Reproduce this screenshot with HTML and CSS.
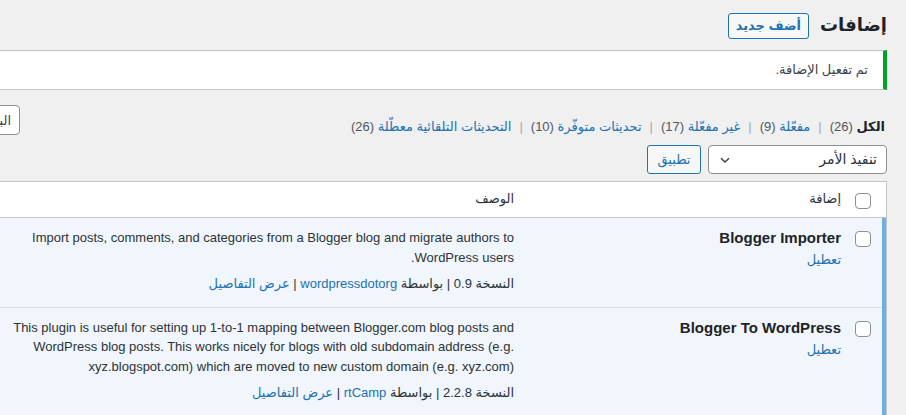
FILE: index.html
```html
<!DOCTYPE html>
<html lang="ar" dir="rtl">
<head>
<meta charset="utf-8">
<title>إضافات</title>
<link rel="stylesheet" href="styles.css">
</head>
<body>
<div class="wrap">
  <div class="head">
    <h1 class="page-title">إضافات</h1>
    <a class="btn btn-primary-outline" href="#">أضف جديد</a>
  </div>

  <div class="notice"><p>تم تفعيل الإضافة.</p></div>

  <div class="filters-row">
    <ul class="subsubsub">
      <li><span class="current">الكل</span> <span class="count">(26)</span></li>
      <li class="sep">|</li>
      <li><a href="#">مفعّلة <span class="count">(9)</span></a></li>
      <li class="sep">|</li>
      <li><a href="#">غير مفعّلة <span class="count">(17)</span></a></li>
      <li class="sep">|</li>
      <li><a href="#">تحديثات متوفّرة <span class="count">(10)</span></a></li>
      <li class="sep">|</li>
      <li><a href="#">التحديثات التلقائية معطّلة <span class="count">(26)</span></a></li>
    </ul>
    <div class="search-box">
      <button class="btn btn-search" type="button">البحث</button>
      <input class="search-input" type="search" aria-label="بحث">
    </div>
  </div>

  <div class="tablenav">
    <div class="select">
      <span class="select-label">تنفيذ الأمر</span>
      <svg class="chev" width="12" height="12" viewBox="0 0 12 12"><path d="M2 4.2 L6 8 L10 4.2" fill="none" stroke="#3c434a" stroke-width="1.5"/></svg>
    </div>
    <button class="btn btn-apply" type="button">تطبيق</button>
  </div>

  <table class="plugins">
    <thead>
      <tr>
        <th class="col-check"><span class="cb"></span></th>
        <th class="col-name">إضافة</th>
        <th class="col-desc">الوصف</th>
        <th class="col-auto"></th>
      </tr>
    </thead>
    <tbody>
      <tr class="active">
        <th class="col-check"><span class="cb"></span></th>
        <td class="col-name">
          <strong class="plugin-name">Blogger Importer</strong>
          <div class="row-actions"><a href="#">تعطيل</a></div>
        </td>
        <td class="col-desc">
          <p class="desc">Import posts, comments, and categories from a Blogger blog and migrate authors to WordPress users.</p>
          <div class="meta">النسخة 0.9 | بواسطة <a href="#">wordpressdotorg</a> | <a href="#">عرض التفاصيل</a></div>
        </td>
        <td class="col-auto"></td>
      </tr>
      <tr class="active">
        <th class="col-check"><span class="cb"></span></th>
        <td class="col-name">
          <strong class="plugin-name">Blogger To WordPress</strong>
          <div class="row-actions"><a href="#">تعطيل</a></div>
        </td>
        <td class="col-desc">
          <p class="desc">This plugin is useful for setting up 1-to-1 mapping between Blogger.com blog posts and WordPress blog posts. This works nicely for blogs with old subdomain address (e.g. xyz.blogspot.com) which are moved to new custom domain (e.g. xyz.com)</p>
          <div class="meta">النسخة 2.2.8 | بواسطة <a href="#">rtCamp</a> | <a href="#">عرض التفاصيل</a></div>
        </td>
        <td class="col-auto"></td>
      </tr>
    </tbody>
  </table>
</div>
</body>
</html>
```

FILE: styles.css
```css
html, body {
  margin: 0;
  padding: 0;
  background: #f0f0f1;
  overflow: hidden;
}
body {
  font-family: Tahoma, "Liberation Sans", "DejaVu Sans", sans-serif;
  font-size: 13px;
  line-height: 1.4;
  color: #3c434a;
}
a { color: #2271b1; text-decoration: none; }

.wrap {
  width: 1150px;
  margin: 0 19px 0 0;
  padding-top: 9px;
}

/* header */
.head {
  display: flex;
  align-items: center;
  gap: 11px;
  height: 32px;
}
.page-title {
  margin: 0;
  font-size: 18px;
  font-weight: 600;
  line-height: 32px;
  color: #1d2327;
}
.btn {
  box-sizing: border-box;
  display: inline-flex;
  align-items: center;
  justify-content: center;
  font-family: inherit;
  font-size: 13px;
  border-radius: 3px;
  background: #f6f7f7;
  border: 1px solid #2271b1;
  color: #2271b1;
  padding: 0 10px;
}
.btn-primary-outline {
  height: 26px;
  font-weight: 600;
  margin-top: 2px;
  padding: 0 7px;
}

/* notice */
.notice {
  margin-top: 9px;
  background: #fff;
  border: 1px solid #c3c4c7;
  border-right: 4px solid #00a32a;
  height: 38px;
  display: flex;
  align-items: center;
  padding: 0 15px;
}
.notice p { margin: 0; }

/* filters */
.filters-row {
  display: flex;
  justify-content: space-between;
  align-items: flex-start;
  margin-top: 15px;
  height: 32px;
}
.subsubsub {
  list-style: none;
  margin: 0;
  padding: 12px 2px 0 0;
  display: flex;
  gap: 8px;
  line-height: 20px;
  color: #646970;
}
.subsubsub .current { font-weight: 700; color: #1d2327; }
.subsubsub .count { color: #50575e; }
.subsubsub .sep { color: #a7aaad; }

.search-box {
  display: flex;
  gap: 6px;
  width: 283px;
}
.btn-search {
  height: 30px;
  width: 44px;
  background: #fff;
  border-color: #8c8f94;
  color: #3c434a;
  border-radius: 4px;
  flex: none;
  justify-content: flex-start;
  padding: 0 8px;
  overflow: hidden;
  white-space: nowrap;
}
.search-input {
  flex: 1;
  height: 30px;
  box-sizing: border-box;
  border: 1px solid #8c8f94;
  border-radius: 4px;
}

/* tablenav */
.tablenav {
  display: flex;
  gap: 7px;
  margin-top: 8px;
  height: 29px;
}
.select {
  box-sizing: border-box;
  width: 179px;
  height: 29px;
  background: #fff;
  border: 1px solid #8c8f94;
  border-radius: 4px;
  display: flex;
  align-items: center;
  justify-content: space-between;
  padding: 0 9px 0 10px;
  color: #2c3338;
  font-size: 14px;
}
.btn-apply {
  height: 29px;
  width: 54px;
  padding: 0;
  font-weight: 400;
}

/* table */
.plugins {
  margin-top: 7px;
  width: 100%;
  table-layout: fixed;
  border-collapse: separate;
  border-spacing: 0;
  background: #fff;
  border: 1px solid #c3c4c7;
}
.plugins th, .plugins td {
  box-sizing: border-box;
  text-align: right;
  vertical-align: top;
  font-weight: 400;
}
.plugins thead th {
  height: 36px;
  vertical-align: middle;
  border-bottom: 1px solid #c3c4c7;
  color: #2c3338;
  padding: 0 10px;
}
.plugins thead .col-check { width: 38px; padding: 3px 15px 0 0; }
.plugins thead .col-name { width: 324px; padding-right: 7px; }
.plugins thead .col-desc { width: 550px; }

.cb {
  display: block;
  box-sizing: border-box;
  width: 16px;
  height: 16px;
  border: 1px solid #8c8f94;
  border-radius: 4px;
  background: #fff;
}

.plugins tbody tr.active th,
.plugins tbody tr.active td {
  background: #f0f6fc;
  box-shadow: inset 0 -1px 0 rgba(0, 0, 0, 0.1);
}
.plugins tbody .col-check {
  border-right: 4px solid #72aee6;
  padding: 13px 11px 0 0;
}
.plugins tbody .col-name {
  padding: 10px 7px 12px 10px;
}
.plugin-name {
  display: block;
  font-size: 15px;
  font-weight: 700;
  line-height: 20px;
  color: #1d2327;
}
.row-actions {
  margin-top: 2px;
  line-height: 19px;
}
.plugins tbody .col-desc {
  padding: 10px 10px 14px 10px;
  line-height: 19.5px;
}
.desc {
  margin: 0 0 7px;
  color: #2c3338;
}
.meta { color: #2c3338; }
```
